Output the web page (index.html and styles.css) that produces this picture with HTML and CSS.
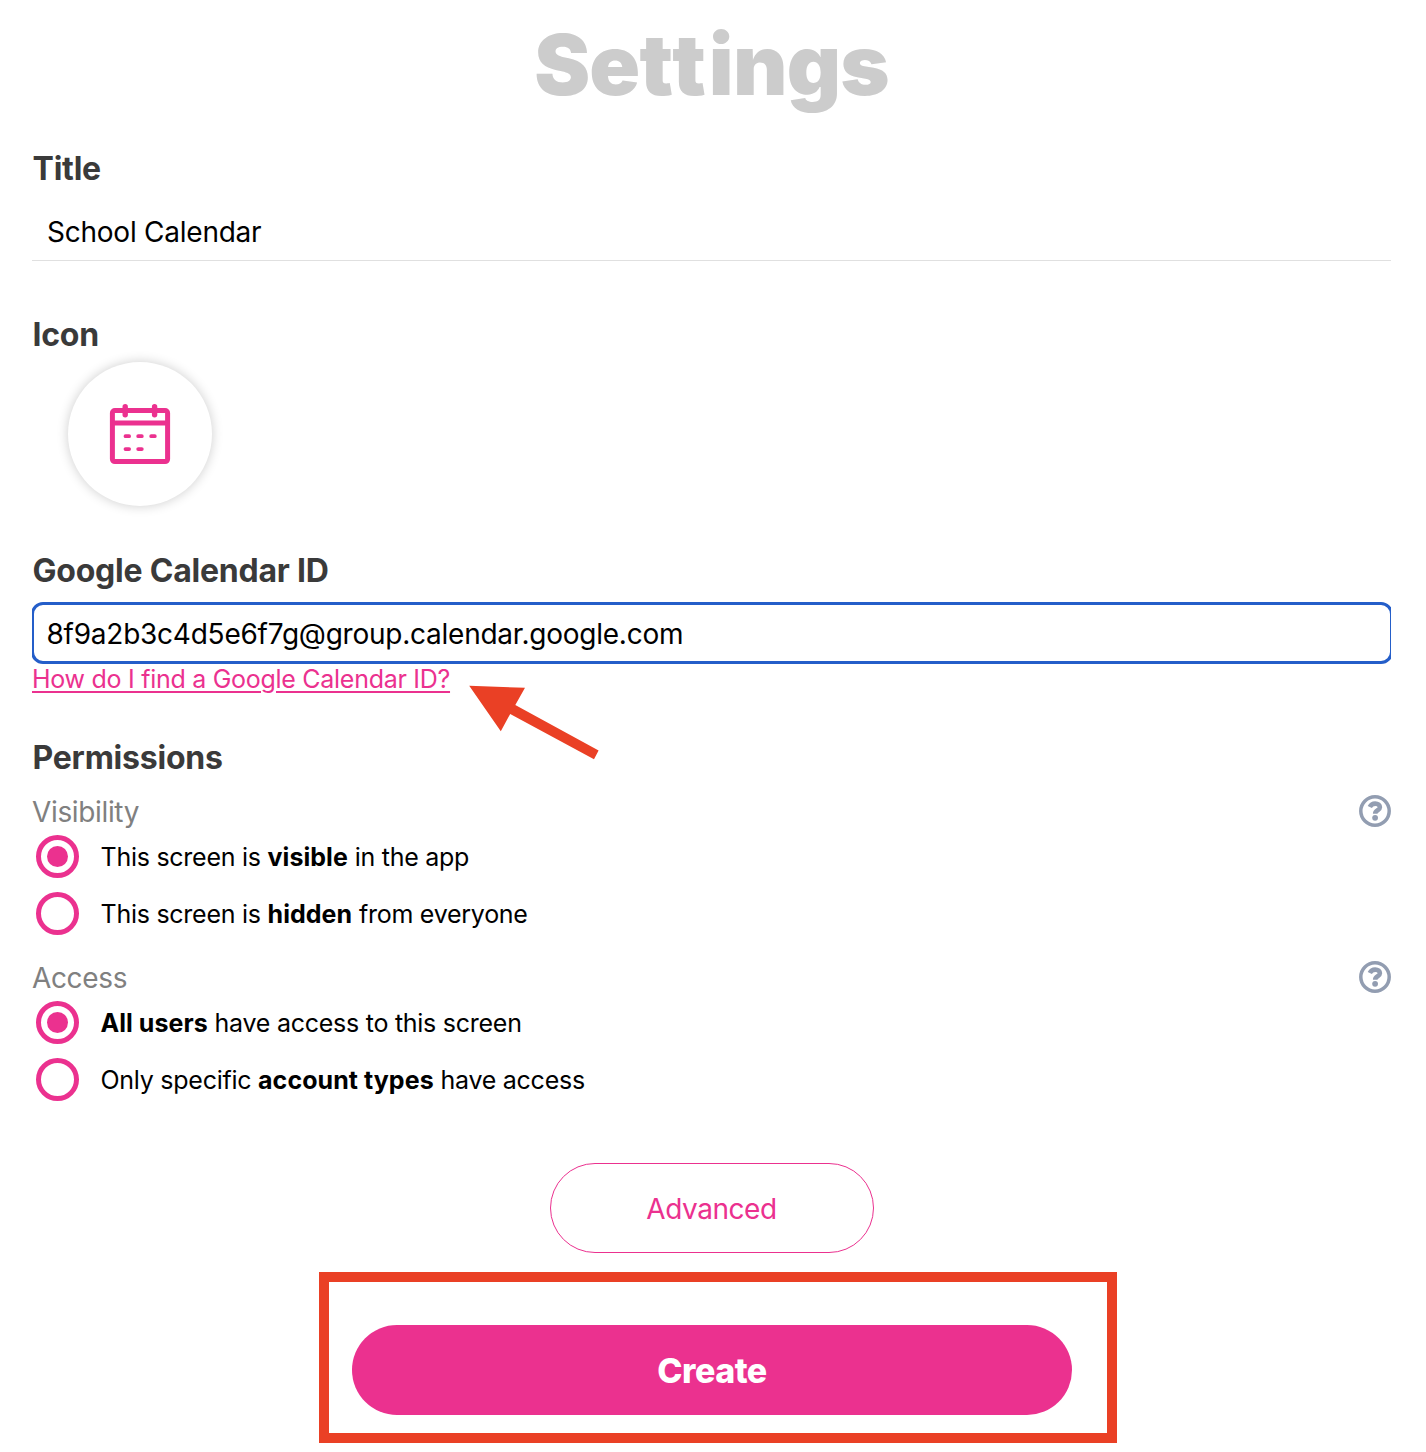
FILE: index.html
```html
<!DOCTYPE html>
<html lang="en">
<head>
    <title>Settings</title>
    <meta charset="utf-8">
    <link rel="stylesheet" href="styles.css">
</head>
<body>
    <main class="settings">
        <h1 class="page-title">Se<span class="wide">tt</span>ings</h1>

        <!-- Title -->
        <h2 class="label">Title</h2>
        <input class="text-input" type="text" value="School Calendar">

        <!-- Icon -->
        <h2 class="label label-icon">Icon</h2>
        <div class="icon-circle">
            <svg width="62" height="62" viewBox="0 0 62 62" fill="none" stroke="#eb318f" stroke-linecap="round">
                <rect x="3.4" y="7.6" width="55.2" height="51" rx="2.5" stroke-width="5"/>
                <path d="M3.4 20H58.6" stroke-width="5" stroke-linecap="butt"/>
                <path d="M16.2 3.8V11.7M45.6 3.8V11.7" stroke-width="5.4"/>
                <path d="M16.5 33.2H20.1M29.2 33.2H32.8M42.2 33.2H45.8M16.5 46.1H20.1M29.2 46.1H32.8" stroke-width="3.8"/>
            </svg>
        </div>

        <!-- Calendar ID -->
        <h2 class="label label-calendar">Google Calendar ID</h2>
        <div class="focus-wrap">
            <input class="text-input focused" type="text" value="8f9a2b3c4d5e6f7g@group.calendar.google.com">
        </div>
        <div class="help-row">
            <a class="help-link" href="#">How do I find a Google Calendar ID?</a>
            <svg class="arrow" width="132" height="76" viewBox="0 0 132 76">
                <path d="M1.2 1.8L57 3.8L47.3 21L130.6 66.4L126 75.2L42.2 30L32.8 47.3Z" fill="#ea4025"/>
            </svg>
        </div>

        <!-- Permissions -->
        <h2 class="label label-permissions">Permissions</h2>
        <div class="group-head">
            <span>Visibility</span>
            <svg class="question" width="32" height="32" viewBox="0 0 32 32" fill="none" stroke="#929db1">
                <circle cx="16" cy="16" r="14.2" stroke-width="3.5"/>
                <path d="M10.8 12C12 9.4 14 8.6 16.2 8.6C19 8.6 20.9 10.2 20.9 12.2C20.9 15.4 16.2 15.2 16.2 18.7" stroke-width="4.6"/>
                <circle cx="16.1" cy="22.8" r="2.9" fill="#929db1" stroke="none"/>
            </svg>
        </div>
        <div class="options">
            <label class="option"><span class="radio checked"></span><span>This screen is <b>visible</b> in the app</span></label>
            <label class="option"><span class="radio"></span><span>This screen is <b>hidden</b> from everyone</span></label>
        </div>
        <div class="group-head">
            <span>Access</span>
            <svg class="question" width="32" height="32" viewBox="0 0 32 32" fill="none" stroke="#929db1">
                <circle cx="16" cy="16" r="14.2" stroke-width="3.5"/>
                <path d="M10.8 12C12 9.4 14 8.6 16.2 8.6C19 8.6 20.9 10.2 20.9 12.2C20.9 15.4 16.2 15.2 16.2 18.7" stroke-width="4.6"/>
                <circle cx="16.1" cy="22.8" r="2.9" fill="#929db1" stroke="none"/>
            </svg>
        </div>
        <div class="options">
            <label class="option"><span class="radio checked"></span><span><b>All users</b> have access to this screen</span></label>
            <label class="option"><span class="radio"></span><span>Only specific <b>account types</b> have access</span></label>
        </div>

        <!-- Buttons -->
        <button class="btn btn-advanced">Advanced</button>
        <div class="create-box">
            <button class="btn btn-create">Create</button>
        </div>
    </main>
</body>
</html>
```

FILE: styles.css
```css
* {
    box-sizing: border-box;
}

body {
    margin: 0;
    background: #fff;
    color: #000;
    font-family: Inter, sans-serif;
}

.settings {
    display: flex;
    flex-direction: column;
    height: 1452px;
    padding: 0 35px 0 32px;
}

.page-title {
    margin: 0 0 20px;
    line-height: 129px;
    font-size: 84px;
    font-weight: 900;
    letter-spacing: -0.8px;
    text-align: center;
    color: #ccc;
}

.page-title .wide {
    letter-spacing: 3px;
}

.label {
    margin: 0;
    padding-left: 0.5px;
    line-height: 40px;
    font-size: 32px;
    font-weight: 700;
    letter-spacing: -0.22px;
    color: #3a3a3a;
}

.label-icon {
    margin-top: 54px;
}

.label-calendar {
    margin-top: 45px;
}

.label-permissions {
    margin-top: 42px;
}

.text-input {
    width: 100%;
    height: 58px;
    margin-top: 14px;
    padding: 0 15px;
    border: 0;
    border-bottom: 1px solid #e0e0e0;
    outline: none;
    background: #fff;
    color: #000;
    font-family: inherit;
    font-size: 28px;
    letter-spacing: -0.24px;
}

.icon-circle {
    display: flex;
    align-items: center;
    justify-content: center;
    width: 144px;
    height: 144px;
    margin: 7px 0 0 36px;
    border-radius: 50%;
    box-shadow: 0 0 12px rgba(0, 0, 0, 0.2);
}

/* the focus ring is cut off at both sides */
.focus-wrap {
    margin-top: 11px;
    overflow: hidden;
}

.text-input.focused {
    display: block;
    width: calc(100% + 3px);
    height: 62px;
    margin: 0 -1.5px;
    padding: 2px 13px 0;
    border: 3px solid #245ec9;
    border-radius: 12px;
}

.help-row {
    position: relative;
    height: 32px;
}

.help-link {
    display: block;
    line-height: 30px;
    font-size: 25px;
    letter-spacing: -0.28px;
    color: #eb318f;
    text-underline-offset: 3px;
    text-decoration-thickness: 2px;
}

.arrow {
    position: absolute;
    left: 436px;
    top: 20px;
}

.group-head {
    display: flex;
    align-items: center;
    justify-content: space-between;
    height: 36px;
    margin-top: 16px;
    font-size: 28px;
    letter-spacing: -0.35px;
    color: #808080;
}

.question {
    margin-bottom: 3px;
}

.options {
    display: flex;
    flex-direction: column;
    gap: 14px;
    margin: 5px 0 9px 3.5px;
}

.option {
    display: flex;
    align-items: center;
    gap: 22px;
    height: 43px;
    font-size: 25px;
    letter-spacing: -0.26px;
}

.option b {
    letter-spacing: 0.06px;
}

.radio {
    display: flex;
    align-items: center;
    justify-content: center;
    width: 43px;
    height: 43px;
    border: 5px solid #eb318f;
    border-radius: 50%;
}

.radio.checked::after {
    content: "";
    width: 21px;
    height: 21px;
    border-radius: 50%;
    background: #eb318f;
}

.btn {
    height: 90px;
    border-radius: 45px;
    font-family: inherit;
}

.btn-advanced {
    align-self: center;
    width: 324px;
    margin-top: 53px;
    padding-top: 3px;
    border: 1px solid #eb318f;
    background: #fff;
    color: #eb318f;
    font-size: 28px;
    letter-spacing: -0.45px;
}

.create-box {
    width: 798px;
    height: 171px;
    margin: 19px 0 0 287px;
    padding: 43px 23px 0;
    border: 10px solid #ea4025;
}

.btn-create {
    width: 720px;
    border: 0;
    background: #eb318f;
    color: #fff;
    font-size: 34px;
    font-weight: 800;
    letter-spacing: -0.5px;
}
```
